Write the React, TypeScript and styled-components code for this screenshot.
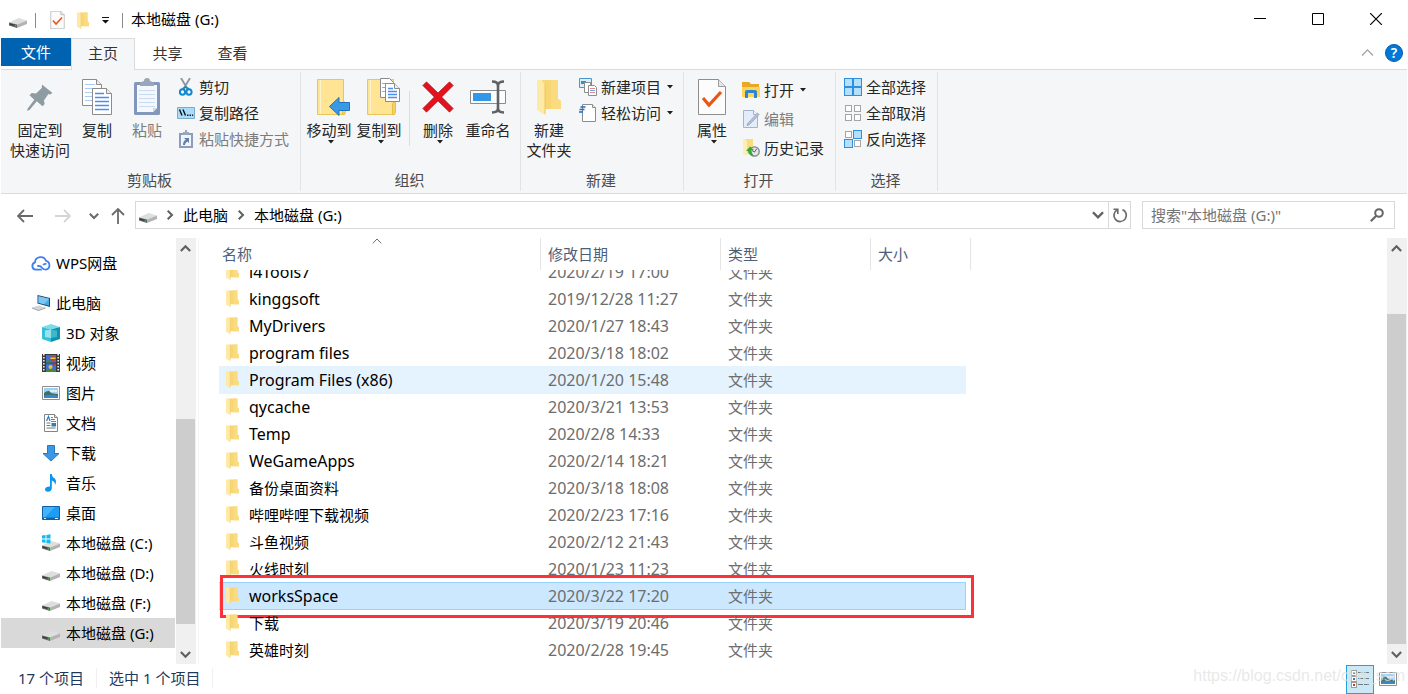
import React, { useLayoutEffect, useRef } from "react";
import styled, { createGlobalStyle, css } from "styled-components";

const GlobalStyle = createGlobalStyle`
  *, *::before, *::after { box-sizing: border-box; }
  body {
    margin: 0;
    background: #fff;
    color: #000;
    font: 15px/20px "Noto Sans", "Noto Sans CJK SC", sans-serif;
  }
  button, input {
    font: inherit;
    color: inherit;
    border: 0;
    padding: 0;
    margin: 0;
    background: none;
  }
  svg { display: block; flex: none; }
`;

const Window = styled.div`
  position: relative;
  display: flex;
  flex-direction: column;
  height: 100vh;
  min-height: 480px;
  padding: 0 1px;
  overflow: hidden;
`;

/* ---------- title bar ---------- */

const TitleBar = styled.header`
  display: flex;
  align-items: center;
  flex: none;
  height: 38px;
  padding: 0 2px 0 8px;
`;

const QuickAccess = styled.div`
  display: flex;
  align-items: center;
  height: 100%;
  padding-top: 2px;
`;

const QuickButton = styled.button<{ $w: number }>`
  display: flex;
  align-items: center;
  justify-content: center;
  width: ${(p) => p.$w}px;
  height: 24px;
`;

const Divider = styled.span<{ $gap?: number }>`
  width: 1px;
  height: 15px;
  margin: 0 ${(p) => p.$gap ?? 8}px;
  background: #8a8a8a;
`;

const Title = styled.h1`
  margin: 0;
  font-size: 15px;
  font-weight: inherit;
  line-height: 20px;
`;

const WindowControls = styled.div`
  display: flex;
  margin-left: auto;
`;

const ControlButton = styled.button`
  display: flex;
  align-items: center;
  justify-content: center;
  width: 58px;
  height: 38px;
`;

/* ---------- ribbon ---------- */

const TabBar = styled.div`
  display: flex;
  flex: none;
  height: 32px;
  border-bottom: 1px solid #dadbdc;
`;

const Tab = styled.button<{ $kind?: "file" | "active" }>`
  width: 65px;
  height: 31px;
  padding-bottom: 2px;
  color: #333;
  ${(p) =>
    p.$kind === "file" &&
    css`
      width: 70px;
      height: 28px;
      padding-bottom: 0;
      background: #0063b1;
      color: #fff;
    `}
  ${(p) =>
    p.$kind === "active" &&
    css`
      width: 64px;
      height: 32px;
      padding-bottom: 3px;
      border: 1px solid #dadbdc;
      border-bottom: 0;
      background: #f5f6f7;
    `}
`;

const TabTools = styled.div`
  display: flex;
  align-items: center;
  gap: 11px;
  margin-left: auto;
  padding: 0 4px 2px 0;
`;

const HelpButton = styled.button`
  width: 18px;
  height: 18px;
  border: 1px solid #0a5ca8;
  border-radius: 9px;
  background: #0078d7;
  color: #fff;
  font-size: 14px;
  font-weight: 600;
  line-height: 16px;
`;

const Ribbon = styled.div`
  display: flex;
  flex: none;
  height: 124px;
  padding: 2px 0;
  border-bottom: 1px solid #dadbdc;
  background: #f5f6f7;
  color: #262626;
`;

const Group = styled.section<{ $w: number }>`
  display: flex;
  flex-direction: column;
  width: ${(p) => p.$w}px;
  padding: 0 5px 0 3px;
  border-right: 1px solid #e2e3e4;
`;

const GroupBody = styled.div<{ $pad?: number }>`
  display: flex;
  flex: 1;
  padding-left: ${(p) => p.$pad ?? 0}px;
`;

const GroupLabel = styled.h2`
  margin: 0;
  padding-bottom: 2px;
  color: #4c4c4c;
  font-size: 15px;
  font-weight: inherit;
  line-height: 18px;
  text-align: center;
`;

const BigButton = styled.button<{ $w?: number }>`
  display: flex;
  flex-direction: column;
  align-items: center;
  flex: none;
  width: ${(p) => p.$w ?? 50}px;
  height: 92px;
  padding-top: 6px;
  line-height: 20px;
  white-space: nowrap;

  &:disabled { color: #7c7c7c; }
  > svg { margin-left: 3px; }
`;

const BigArt = styled.span`
  display: flex;
  align-items: center;
  justify-content: center;
  width: 44px;
  height: 38px;
  margin-bottom: 4px;
`;

const GroupRule = styled.span`
  width: 1px;
  height: 55px;
  margin: 19px 3px 0 5px;
  background: #dcddde;
`;

const SmallColumn = styled.div<{ $gap?: number; $top?: number }>`
  display: flex;
  flex-direction: column;
  align-items: flex-start;
  gap: ${(p) => p.$gap ?? 6}px;
  padding: ${(p) => p.$top ?? 5}px 0 0 5px;
`;

const SmallButton = styled.button`
  display: flex;
  align-items: center;
  gap: 4px;
  height: 20px;
  white-space: nowrap;

  &:disabled { color: #7c7c7c; }
  > svg:nth-of-type(2) { margin-left: 2px; }
`;

/* ---------- address bar ---------- */

const AddressRow = styled.nav`
  display: flex;
  align-items: center;
  flex: none;
  height: 44px;
  padding: 0 12px 2px 0;
`;

const NavButtons = styled.div`
  display: flex;
  align-items: center;
  padding: 2px 0 0 10px;
`;

const NavButton = styled.button<{ $w: number }>`
  display: flex;
  align-items: center;
  justify-content: center;
  width: ${(p) => p.$w}px;
  height: 24px;
`;

const AddressBox = styled.div`
  display: flex;
  align-items: center;
  flex: 1;
  height: 28px;
  padding-left: 3px;
  border: 1px solid #d9d9d9;
`;

const Crumb = styled.a`
  padding-bottom: 1px;
  color: #000;
  text-decoration: none;
`;

const CrumbArrow = styled.span`
  display: flex;
  justify-content: center;
  width: 26px;
`;

const AddressTools = styled.div`
  display: flex;
  height: 100%;
  margin-left: auto;
`;

const RefreshButton = styled(NavButton)`
  height: 100%;
  border-left: 1px solid #d9d9d9;
`;

const DropButton = styled(NavButton)`
  height: 100%;
`;

const SearchBox = styled.label`
  display: flex;
  align-items: center;
  width: 253px;
  height: 28px;
  margin-left: 11px;
  padding: 0 10px 0 8px;
  border: 1px solid #d9d9d9;
`;

const SearchInput = styled.input`
  flex: 1;
  min-width: 0;
  height: 24px;
  outline: 0;

  &::placeholder { color: #757575; opacity: 1; }
`;

/* ---------- body ---------- */

const Body = styled.div`
  display: flex;
  flex: 1;
  min-height: 0;
`;

const Sidebar = styled.aside`
  width: 174px;
  padding-top: 10px;
  overflow: hidden;
`;

const TreeItem = styled.a<{ $level: 0 | 1; $selected?: boolean; $spaced?: boolean }>`
  display: flex;
  align-items: center;
  gap: ${(p) => (p.$level ? 6 : 5)}px;
  height: 30px;
  margin-bottom: ${(p) => (p.$spaced ? 10 : 0)}px;
  padding-left: ${(p) => (p.$level ? 41 : 30)}px;
  background: ${(p) => (p.$selected ? "#d9d9d9" : "transparent")};
  color: #000;
  text-decoration: none;
  white-space: nowrap;
`;

const ScrollTrack = styled.div`
  display: flex;
  flex-direction: column;
  flex: none;
  width: 20px;
  background: #f0f0f0;
`;

const ScrollButton = styled.button`
  display: flex;
  align-items: center;
  justify-content: center;
  flex: none;
  width: 19px;
  height: 20px;
`;

const ScrollSpace = styled.div<{ $share: number }>`
  flex: ${(p) => p.$share} 0 0;
`;

const ScrollThumb = styled(ScrollSpace)`
  width: 19px;
  background: #cdcdcd;
`;

const SidebarScroll = styled(ScrollTrack)`
  margin-left: 1px;
`;

const Content = styled.main`
  flex: 1;
  min-width: 0;
  margin-left: 2px;
  padding-left: 20px;
  border-left: 1px solid #f5f5f5;
  overflow: auto;
  scrollbar-width: none;
`;

const FileTable = styled.table`
  width: 752px;
  border-spacing: 0;
  table-layout: fixed;
`;

const HeadCell = styled.th`
  position: sticky;
  top: 0;
  z-index: 1;
  height: 32px;
  padding: 0 0 0 7px;
  border-right: 1px solid #e5e5e5;
  background: #fff;
  color: #4c607a;
  font-weight: inherit;
  text-align: left;

  &:first-child { padding-left: 3px; }
`;

const SortMark = styled.span`
  position: absolute;
  top: -2px;
  left: 50%;
  margin-left: -8px;
`;

const Cell = styled.td`
  height: 27px;
  padding: 0 0 2px 7px;
  color: #6d6d6d;
  white-space: nowrap;
`;

const FileRow = styled.tr<{ $state?: "hover" | "selected" }>`
  position: relative;
  ${(p) =>
    p.$state === "hover" &&
    css`
      ${Cell} {
        background: #e5f3ff;
        box-shadow: 0 -1px 0 #e5f3ff;
      }
    `}
  ${(p) =>
    p.$state === "selected" &&
    css`
      ${Cell} {
        background: #cce8ff;
        box-shadow: 0 -1px 0 #99d1ff, inset 0 -1px 0 #99d1ff;
      }
      ${Cell}:last-child { border-right: 1px solid #99d1ff; }
    `}
`;

const FileName = styled.div<{ $latin: boolean }>`
  display: flex;
  align-items: center;
  gap: 10px;
  color: #000;
  font-size: ${(p) => (p.$latin ? 16 : 15)}px;
`;

const Stamp = styled.time`
  font-size: 16px;
`;

const Highlight = styled.span`
  position: absolute;
  inset: -8px -3px -8px 1px;
  border: 3px solid #fb3339;
  pointer-events: none;
`;

/* ---------- status bar ---------- */

const StatusBar = styled.footer`
  display: flex;
  align-items: center;
  flex: none;
  height: 30px;
  padding: 0 5px 0 17px;
  color: #1e395b;
`;

const StatusText = styled.span`
  padding-right: 12px;
  margin: 0 12px 2px 0;
  border-right: 1px solid #f0f0f0;
`;

const ViewButtons = styled.div`
  display: flex;
  margin-left: auto;
`;

const ViewButton = styled.button<{ $on?: boolean }>`
  display: flex;
  align-items: center;
  justify-content: center;
  width: 28px;
  height: 29px;
  border: 1px solid ${(p) => (p.$on ? "#26a0da" : "transparent")};
  background: ${(p) => (p.$on ? "#cbe8f6" : "transparent")};
`;

const Watermark = styled.span`
  position: absolute;
  right: 3px;
  bottom: 8px;
  color: rgba(225, 225, 225, 0.75);
  font: 16px/20px "Liberation Sans", sans-serif;
  pointer-events: none;
`;

/* ---------- icons ---------- */

const DriveIcon = ({ system }: { system?: boolean }) => (
  <svg width="18" height="18" viewBox="0 0 18 18">
    <path d="M0 11.500 9.500 7 18 9.500 8 13.500z" fill="#dedede" />
    <path d="M0 11.500 8 13.500v3.500L0 14.500z" fill="#606060" />
    <path d="M8 13.500 18 9.500v3.500L8 17z" fill="#b3b3b3" />
    <path d="M1 13 7 14.800" stroke="#333" />
    <path d="M5.500 14.200h1.500v1.300H5.500z" fill="#35d24a" />
    {system && (
      <path d="M0 1.600 3.500 1v3.500H0zM4.400.9 8.500.2v4.300H4.400zM0 5.400h3.500v3.500L0 8.300zM4.400 5.400h4.100v4.200l-4.100-.7z" fill="#16b9f2" />
    )}
  </svg>
);

const CheckPage = ({ w, h }: { w: number; h: number }) => (
  <svg width={w} height={h} viewBox="0 0 28 36">
    <path d="M.5.5h20l7 7v28H.5z" fill="#fcfcfc" stroke="#8e8e8e" />
    <path d="M20.5.5v7h7" fill="#e6e6e6" stroke="#9a9a9a" />
    <path d="m5 19 6 7L23 13" fill="none" stroke="#ea5514" strokeWidth="3.2" />
  </svg>
);

const FolderIcon = ({ w, h }: { w: number; h: number }) => (
  <svg width={w} height={h} viewBox="0 0 24 36" preserveAspectRatio="none">
    <path d="M5 1h16v19l3 2v8H5z" fill="#f7d674" />
    <path d="M14 1h7v19l3 2v8H14z" fill="#fadb80" />
    <path d="M0 1h4l4 4v31l-8-5z" fill="#ffe9a6" />
    <path d="M8 5v30" stroke="#efc65c" />
  </svg>
);

const Caret = () => (
  <svg width="6" height="4" viewBox="0 0 6 4">
    <path d="M0 0h6L3 3.500z" fill="#1e1e1e" />
  </svg>
);

const Chevron = ({ dir, size = 10, color = "#606060", width = 2 }: { dir: "up" | "down" | "right"; size?: number; color?: string; width?: number }) => (
  <svg width={size} height={size} viewBox="0 0 10 10">
    <path
      d={dir === "up" ? "M.8 7.3 5 3l4.200 4.300" : dir === "down" ? "M.8 2.700 5 7l4.200-4.300" : "M2.700.8 7 5 2.700 9.200"}
      fill="none"
      stroke={color}
      strokeWidth={width}
    />
  </svg>
);

const PinIcon = () => (
  <svg width="28" height="36" viewBox="0 0 28 36">
    <path d="M16 5.500 26.500 14l-2.300 1.500-1.800-.5-4.500 6.500.8 3.500-2.200 2.200-5.700-5L3.500 31l-2.500.8.7-2.300 6.600-8.800-4.800-4.500 2.200-2.300 4.300.6 5.800-5.500z" fill="#8f9ba3" />
  </svg>
);

const CopyIcon = () => (
  <svg width="30" height="36" viewBox="0 0 30 36">
    <path d="M.5.500h14l5 5v21H.5z" fill="#fff" stroke="#8b8b8b" />
    <path d="M14.500.500v5h5" fill="#eee" stroke="#8b8b8b" />
    <path d="M3 5.500h10M3 9.500h14M3 13.500h14M3 17.500h8M3 21.500h8" stroke="#a9caf5" />
    <path d="M10.500 9.500h14l5 5v21h-19z" fill="#fff" stroke="#8b8b8b" />
    <path d="M24.500 9.500v5h5" fill="#eee" stroke="#8b8b8b" />
    <path d="M13 14.500h9M13 18.500h14M13 22.500h14M13 26.500h14M13 30.500h14" stroke="#4b8df0" strokeWidth="1.400" />
  </svg>
);

const PasteIcon = () => (
  <svg width="28" height="38" viewBox="0 0 28 38">
    <rect x="1" y="4" width="26" height="33" rx="1.500" fill="#8396bb" />
    <path d="M4 7h20v23l-4 4H4z" fill="#f4f8fd" />
    <path d="M6 12.500h16M6 16.500h16M6 20.500h16M6 24.500h16M6 28.500h16" stroke="#c9dbee" />
    <path d="m20 34 4-4h-4z" fill="#cfd9e8" />
    <path d="M7 8V4.500L11 3a3 3 0 0 1 6 0l4 1.500V8z" fill="#98a5bb" />
  </svg>
);

const ScissorsIcon = () => (
  <svg width="18" height="18" viewBox="0 0 18 18">
    <path d="m4 0 6.500 11M13 0 6.500 11" stroke="#8d9499" strokeWidth="1.800" />
    <ellipse cx="5.500" cy="14" rx="2.600" ry="2.800" fill="none" stroke="#1488cc" strokeWidth="2" />
    <ellipse cx="12" cy="14" rx="2.600" ry="2.800" fill="none" stroke="#1488cc" strokeWidth="2" />
    <path d="m5.500 11 3-2 3.500 2" fill="none" stroke="#1488cc" strokeWidth="1.800" />
  </svg>
);

const PathIcon = () => (
  <svg width="18" height="18" viewBox="0 0 18 18">
    <path d="M.5 3.500h17v11H.5z" fill="#a9dcfb" stroke="#7fa9c4" />
    <path d="m2.500 5.500 2.500 6M6 5.500l2.500 6" stroke="#111" strokeWidth="1.400" />
    <path d="M10 10.500h1.500v1.500H10zM12.500 10.500H14v1.500h-1.500zM15 10.500h1.200v1.500H15z" fill="#222" />
  </svg>
);

const PasteShortcutIcon = () => (
  <svg width="18" height="18" viewBox="0 0 18 18">
    <path d="M2 3h14v15H2z" fill="#8c9dbc" />
    <path d="M4 5h10v11H4z" fill="#f1f5fb" />
    <path d="M6 5V2h2V0h2v2h2v3z" fill="#9aa8be" />
    <path d="M7 8h5v5l-1.600-1.600Q8 12.500 8 15H6q0-4 2.800-5.200z" fill="#5e7fae" />
  </svg>
);

const BigFolder = () => (
  <>
    <path d="M1.500 1.500h26v35h-26z" fill="#ffe494" stroke="#e8c65a" />
    <path d="M4.500 2v34" stroke="#fff3c9" />
    <path d="M26.500 36.500v-11q1.500-3 3-1v9l-1 3z" fill="#f8d260" stroke="#e5bd4a" />
  </>
);

const MoveToIcon = () => (
  <svg width="42" height="38" viewBox="-8 0 42 38">
    <BigFolder />
    <path d="M13.500 28.500 23 19.500v5h10.500v8H23v5z" fill="#3a99e6" stroke="#1f74bb" />
  </svg>
);

const CopyToIcon = () => (
  <svg width="42" height="38" viewBox="-8 0 42 38">
    <BigFolder />
    <path d="M14.500.500h9l4 4v15h-13z" fill="#fff" stroke="#8b8b8b" />
    <path d="M16 5.500h5M16 9.500h4M16 13.500h4" stroke="#7eb0f0" />
    <path d="M19.500 5.500h9l5 5v13h-14z" fill="#fff" stroke="#8b8b8b" />
    <path d="M28.500 5.500v5h5" fill="#eee" stroke="#8b8b8b" />
    <path d="M22 10.500h5M22 13.500h9M22 16.500h9M22 19.500h9" stroke="#4b8df0" strokeWidth="1.400" />
  </svg>
);

const DeleteIcon = () => (
  <svg width="32" height="36" viewBox="0 0 32 36">
    <path d="m1 6.500 3.500-3.500L16 14.200 27.500 3 31 6.500 19.500 18 31 29.500 27.500 33 16 21.700 4.500 33 1 29.500 12.500 18z" fill="#e8101b" stroke="#a3141b" />
  </svg>
);

const RenameIcon = () => (
  <svg width="36" height="36" viewBox="0 0 36 36">
    <path d="M.5 11.500h35v13H.5z" fill="#fdfdfd" stroke="#8c8c8c" />
    <path d="M3 14h18v8H3z" fill="#3297e6" />
    <path d="M28 4v28" stroke="#5f6163" strokeWidth="2.600" />
    <path d="M22 2.500q6 0 6 4 0-4 6-4M22 33.500q6 0 6-4 0 4 6 4" fill="none" stroke="#5f6163" strokeWidth="2.400" />
  </svg>
);

const NewItemIcon = () => (
  <svg width="18" height="18" viewBox="0 0 18 18">
    <path d="M.5.500h12v9H.5z" fill="#d6effc" stroke="#4b98c8" />
    <path d="M2 3h5v3H2z" fill="#3b8fb4" />
    <path d="M5.500 4.500h6v10h-6z" fill="#fff" stroke="#8d8d8d" />
    <path d="M9.500 7.500h6l2 2v8h-8z" fill="#fff" stroke="#8d8d8d" />
    <path d="M11 10.500h5M11 14.500h5" stroke="#e08a8a" />
    <path d="M11 12.500h5" stroke="#6ea6e8" />
  </svg>
);

const EasyAccessIcon = () => (
  <svg width="18" height="18" viewBox="0 0 18 18">
    <path d="M3.500.500h10l3 3v14h-13z" fill="#fff" stroke="#8d8d8d" />
    <path d="M13.500.500v3h3" fill="#eee" stroke="#8d8d8d" />
    <path d="M1.500 3h5M.5 5.500h5M0 8h4" stroke="#1f6fc2" strokeWidth="1.300" />
  </svg>
);

const OpenIcon = () => (
  <svg width="18" height="18" viewBox="0 0 18 18">
    <path d="M0 1h7l2 2h8v4H0z" fill="#e8a825" />
    <path d="M0 6h18v10H0z" fill="#ffd45c" />
    <path d="M3 17v-6q0-2 2-2h8q2 0 2 2v6h-3v-5H6v5z" fill="#2d86cf" />
  </svg>
);

const EditIcon = () => (
  <svg width="18" height="18" viewBox="0 0 18 18">
    <path d="M1.500.500h10l4 4v13h-14z" fill="#e3ecf9" stroke="#a5b4cb" />
    <path d="M11.500.500v4h4" fill="#f5f8fd" stroke="#a5b4cb" />
    <path d="m5 15.500.8-2.300L15.500 3l1.700 1.500L7.300 14.700z" fill="#b4c2d8" stroke="#8796b0" strokeWidth=".6" />
  </svg>
);

const HistoryIcon = () => (
  <svg width="18" height="18" viewBox="0 0 18 18">
    <path d="M1 0h10v15H1z" fill="#fbdc7c" />
    <path d="M1 0h2l2 2v15l-4-2z" fill="#ffedb3" />
    <circle cx="12.500" cy="12.500" r="4.700" fill="#e3e5e6" stroke="#7c8285" strokeWidth="1.300" />
    <path d="M15 9.500 12.500 13 10 11.500" fill="none" stroke="#5b6164" />
    <path d="M4 12 8 7.500 12 11H9.500q0 4 3 6Q6.500 17 6 12z" fill="#35a83a" />
  </svg>
);

const squares: [number, number][] = [[1, 1], [10, 1], [1, 10], [10, 10]];

const SelectIcon = ({ on }: { on: boolean[] }) => (
  <svg width="18" height="18" viewBox="0 0 18 18">
    {squares.map(([x, y], i) =>
      on[i] ? (
        <rect key={i} x={x - 0.5} y={y - 0.5} width="8" height="8" fill="#b5e0fc" stroke="#2d8fdd" />
      ) : (
        <rect key={i} x={x + 0.5} y={y + 0.5} width="6" height="6" fill="#fdfdfd" stroke="#a5a5a5" />
      ),
    )}
  </svg>
);

const Arrow = ({ d, color }: { d: string; color: string }) => (
  <svg width="16" height="16" viewBox="0 0 16 16">
    <path d={d} fill="none" stroke={color} strokeWidth="1.800" />
  </svg>
);

const RefreshIcon = () => (
  <svg width="16" height="16" viewBox="0 0 16 16">
    <path d="M5 3A6.200 6.200 0 1 0 10.500 2.600" fill="none" stroke="#6a6a6a" strokeWidth="1.700" />
    <path d="M5.800 7V2.300H1.500" fill="none" stroke="#6a6a6a" strokeWidth="1.600" />
  </svg>
);

const SearchIcon = () => (
  <svg width="14" height="14" viewBox="0 0 14 14">
    <circle cx="9" cy="5" r="3.800" fill="none" stroke="#666" strokeWidth="2" />
    <path d="M6 8 .8 13.200" stroke="#666" strokeWidth="2.200" />
  </svg>
);

const CloudIcon = () => (
  <svg width="20" height="18" viewBox="0 0 20 18">
    <path d="M10 15.700H4.800A3.800 3.800 0 0 1 4 8.300 5.700 5.700 0 0 1 15 6.800 4.600 4.600 0 0 1 15 15.700q-2.500 0-3.800-1.700Q9.500 11.500 7 12" fill="none" stroke="#3f7ff0" strokeWidth="1.800" strokeLinecap="round" />
    <path d="M12 11q1.500-1.500 3.500-1" fill="none" stroke="#3f7ff0" strokeWidth="1.500" />
  </svg>
);

const ComputerIcon = () => (
  <svg width="20" height="18" viewBox="0 0 20 18">
    <path d="m6.500 1 12.500 3v9L6.500 9.500z" fill="#2c4257" />
    <path d="m7.500 2.300 10.500 2.500v7L7.500 8.800z" fill="#46a9e8" />
    <path d="m7.500 2.300 10.500 2.500-5 5.400-5.500-1.400z" fill="#7cc8f5" />
    <path d="m1 13.500 7-2 6.500 2-7 2.500z" fill="#cfd4d8" />
    <path d="m1 13.500 6.500 2.500v1L1 14.500zM14.500 13.500 7.500 16v1l7-2.500z" fill="#9ba1a6" />
  </svg>
);

const CubeIcon = () => (
  <svg width="18" height="18" viewBox="0 0 18 18">
    <path d="M0 3 9 0l9 3-9 2.500z" fill="#7bdcea" />
    <path d="M0 3 9 5.500V18l-9-3z" fill="#35c0d8" />
    <path d="M18 3 9 5.500V18l9-3z" fill="#0c93b0" />
    <path d="M3 6.500 9 5.500v8.500L3 13z" fill="#c4f2f8" opacity=".7" />
    <path d="M9 5.500l6 1V13l-6 1z" fill="#3eb6cc" />
  </svg>
);

const VideoIcon = () => (
  <svg width="18" height="18" viewBox="0 0 18 18">
    <path d="M0 0h18v18H0z" fill="#3a3a3a" />
    <path d="M4 1h10v7.500H4zM4 9.500h10V18H4z" fill="#3f6fd2" />
    <path d="M1.800 0v18M16.200 0v18" stroke="#ececec" strokeWidth="1.600" strokeDasharray="1.600 1.400" />
    <circle cx="11" cy="4.500" r="2.500" fill="#d9352b" />
    <path d="M8.500 3.500h5v1.500h-5z" fill="#e9d02f" />
    <path d="M4 7q3-2 6 1.500H4zM4 16q5-2 10 0v2H4z" fill="#3e8b3a" />
    <circle cx="8.500" cy="13" r="2" fill="#edc12c" />
    <path d="m10 9.500 2 2.500 1.500-2.500z" fill="#c92c20" />
  </svg>
);

const PictureIcon = () => (
  <svg width="18" height="18" viewBox="0 0 18 18">
    <path d="M.5 2.500h17v13H.5z" fill="#fff" stroke="#8f8f8f" />
    <path d="M2 4h14v10H2z" fill="#9fd0f3" />
    <path d="M2 9q5-4 7 0 3 1 7 1v2H2z" fill="#3f6f62" />
    <path d="M2 11.500q7-1.500 14 0V14H2z" fill="#3d86c4" />
    <path d="M8 6h7v2H8z" fill="#d9eefb" />
  </svg>
);

const DocumentIcon = () => (
  <svg width="18" height="18" viewBox="0 0 18 18">
    <path d="M2.500.500h10l3 3v14h-13z" fill="#fff" stroke="#858585" />
    <path d="M12.500.500v3h3" fill="#ddd" stroke="#858585" />
    <path d="m4.500 7 2-4.500L8 7" fill="none" stroke="#2a80c4" strokeWidth="1.200" />
    <path d="M9 5.500h4M4.500 9h4M4.500 11.500h4M4.500 14h9" stroke="#777" />
    <path d="M9 3.500h2M9 7.500h5" stroke="#2a9ad4" />
    <path d="M9.500 9H14v3.500H9.500z" fill="#2c7fae" />
  </svg>
);

const DownloadIcon = () => (
  <svg width="18" height="18" viewBox="0 0 18 18">
    <path d="M5.500 1.500h7v8h4.500l-8 7.500L1 9.500h4.500z" fill="#3c97e4" stroke="#2878bd" />
  </svg>
);

const MusicIcon = () => (
  <svg width="18" height="18" viewBox="0 0 18 18">
    <path d="M8 0h1.700q.3 3 3 4.500 2.500 2 .3 6.500.2-3.500-3.200-4.500v7.700Q9.500 17.500 6 17.800 3 17.800 3 15.300 3.500 12.300 8 12.500z" fill="#0a96f0" />
  </svg>
);

const DesktopIcon = () => (
  <svg width="18" height="18" viewBox="0 0 18 18">
    <path d="M.5 2.500h17v13H.5z" fill="#1e9cf5" stroke="#0b62a8" />
    <path d="M1 13.500h16V15H1z" fill="#0a66b0" />
    <path d="M2 14h2v1H2zM13 14h3v1h-3z" fill="#e8f4fd" />
    <path d="M1 3h12L3 13H1z" fill="#45b2fa" />
  </svg>
);

const DetailsIcon = () => (
  <svg width="20" height="18" viewBox="0 0 20 18">
    {[1, 7, 13].map((y, i) => (
      <g key={y}>
        <rect x="1.500" y={y - 0.5} width="5" height="5" fill="#fff" stroke="#9d9d9d" />
        <rect x="3" y={y + 1} width="2" height="2" fill={["#4d7a74", "#3c76b8", "#c93a2c"][i]} />
        <path d={`M8 ${y + 1.5}h5M14 ${y + 1.5}h5`} stroke="#6e7a80" />
      </g>
    ))}
  </svg>
);

/* ---------- data ---------- */

const places: { name: string; icon: React.ReactNode; level: 0 | 1; spaced?: boolean; selected?: boolean }[] = [
  { name: "WPS网盘", icon: <CloudIcon />, level: 0, spaced: true },
  { name: "此电脑", icon: <ComputerIcon />, level: 0 },
  { name: "3D 对象", icon: <CubeIcon />, level: 1 },
  { name: "视频", icon: <VideoIcon />, level: 1 },
  { name: "图片", icon: <PictureIcon />, level: 1 },
  { name: "文档", icon: <DocumentIcon />, level: 1 },
  { name: "下载", icon: <DownloadIcon />, level: 1 },
  { name: "音乐", icon: <MusicIcon />, level: 1 },
  { name: "桌面", icon: <DesktopIcon />, level: 1 },
  { name: "本地磁盘 (C:)", icon: <DriveIcon system />, level: 1 },
  { name: "本地磁盘 (D:)", icon: <DriveIcon />, level: 1 },
  { name: "本地磁盘 (F:)", icon: <DriveIcon />, level: 1 },
  { name: "本地磁盘 (G:)", icon: <DriveIcon />, level: 1, selected: true },
];

const files: { name: string; date: string; state?: "hover" | "selected" }[] = [
  { name: "i4Tools7", date: "2020/2/19 17:00" },
  { name: "kinggsoft", date: "2019/12/28 11:27" },
  { name: "MyDrivers", date: "2020/1/27 18:43" },
  { name: "program files", date: "2020/3/18 18:02" },
  { name: "Program Files (x86)", date: "2020/1/20 15:48", state: "hover" },
  { name: "qycache", date: "2020/3/21 13:53" },
  { name: "Temp", date: "2020/2/8 14:33" },
  { name: "WeGameApps", date: "2020/2/14 18:21" },
  { name: "备份桌面资料", date: "2020/3/18 18:08" },
  { name: "哔哩哔哩下载视频", date: "2020/2/23 17:16" },
  { name: "斗鱼视频", date: "2020/2/12 21:43" },
  { name: "火线时刻", date: "2020/1/23 11:23" },
  { name: "worksSpace", date: "2020/3/22 17:20", state: "selected" },
  { name: "下载", date: "2020/3/19 20:46" },
  { name: "英雄时刻", date: "2020/2/28 19:45" },
];

const isLatin = (text: string) => /^[\x20-\x7e]+$/.test(text);

/* ---------- sections ---------- */

const RibbonPanel = () => (
  <Ribbon>
    <Group $w={300}>
      <GroupBody $pad={4}>
        <BigButton $w={64}><BigArt><PinIcon /></BigArt>固定到<br />快速访问</BigButton>
        <BigButton><BigArt><CopyIcon /></BigArt>复制</BigButton>
        <BigButton disabled><BigArt><PasteIcon /></BigArt>粘贴</BigButton>
        <SmallColumn>
          <SmallButton><ScissorsIcon />剪切</SmallButton>
          <SmallButton><PathIcon />复制路径</SmallButton>
          <SmallButton disabled><PasteShortcutIcon />粘贴快捷方式</SmallButton>
        </SmallColumn>
      </GroupBody>
      <GroupLabel>剪贴板</GroupLabel>
    </Group>
    <Group $w={220}>
      <GroupBody>
        <BigButton><BigArt><MoveToIcon /></BigArt>移动到<Caret /></BigButton>
        <BigButton><BigArt><CopyToIcon /></BigArt>复制到<Caret /></BigButton>
        <GroupRule />
        <BigButton><BigArt><DeleteIcon /></BigArt>删除<Caret /></BigButton>
        <BigButton><BigArt><RenameIcon /></BigArt>重命名</BigButton>
      </GroupBody>
      <GroupLabel>组织</GroupLabel>
    </Group>
    <Group $w={163}>
      <GroupBody>
        <BigButton><BigArt><FolderIcon w={24} h={36} /></BigArt>新建<br />文件夹</BigButton>
        <SmallColumn>
          <SmallButton><NewItemIcon />新建项目<Caret /></SmallButton>
          <SmallButton><EasyAccessIcon />轻松访问<Caret /></SmallButton>
        </SmallColumn>
      </GroupBody>
      <GroupLabel>新建</GroupLabel>
    </Group>
    <Group $w={152}>
      <GroupBody>
        <BigButton><BigArt><CheckPage w={28} h={36} /></BigArt>属性<Caret /></BigButton>
        <SmallColumn $gap={9} $top={8}>
          <SmallButton><OpenIcon />打开<Caret /></SmallButton>
          <SmallButton disabled><EditIcon />编辑</SmallButton>
          <SmallButton><HistoryIcon />历史记录</SmallButton>
        </SmallColumn>
      </GroupBody>
      <GroupLabel>打开</GroupLabel>
    </Group>
    <Group $w={102}>
      <GroupBody>
        <SmallColumn>
          <SmallButton><SelectIcon on={[true, true, true, true]} />全部选择</SmallButton>
          <SmallButton><SelectIcon on={[false, false, false, false]} />全部取消</SmallButton>
          <SmallButton><SelectIcon on={[false, true, true, false]} />反向选择</SmallButton>
        </SmallColumn>
      </GroupBody>
      <GroupLabel>选择</GroupLabel>
    </Group>
  </Ribbon>
);

const FileList = () => {
  const viewport = useRef<HTMLElement>(null);

  useLayoutEffect(() => {
    const el = viewport.current;
    if (el) el.scrollTop = el.scrollHeight;
  }, []);

  return (
    <Content ref={viewport}>
      <FileTable>
        <colgroup>
          <col width="322" />
          <col width="180" />
          <col width="150" />
          <col width="95" />
          <col width="5" />
        </colgroup>
        <thead>
          <tr>
            <HeadCell>
              名称
              <SortMark><Chevron dir="up" color="#6d6d6d" width={1} /></SortMark>
            </HeadCell>
            <HeadCell>修改日期</HeadCell>
            <HeadCell>类型</HeadCell>
            <HeadCell colSpan={2}>大小</HeadCell>
          </tr>
        </thead>
        <tbody>
          {files.map((file) => (
            <FileRow key={file.name} $state={file.state}>
              <Cell>
                <FileName $latin={isLatin(file.name)}>
                  <FolderIcon w={13} h={17} />
                  {file.name}
                </FileName>
                {file.state === "selected" && <Highlight />}
              </Cell>
              <Cell><Stamp>{file.date}</Stamp></Cell>
              <Cell>文件夹</Cell>
              <Cell />
            </FileRow>
          ))}
        </tbody>
      </FileTable>
    </Content>
  );
};

export default function App() {
  return (
    <Window>
      <GlobalStyle />
      <TitleBar>
        <QuickAccess>
          <DriveIcon />
          <Divider />
          <QuickButton $w={26} aria-label="属性"><CheckPage w={15} h={18} /></QuickButton>
          <QuickButton $w={26} aria-label="新建文件夹"><FolderIcon w={12} h={17} /></QuickButton>
          <QuickButton $w={18} aria-label="自定义快速访问工具栏">
            <svg width="7" height="7" viewBox="0 0 7 7"><path d="M0 0h7v1H0zM0 3h7L3.500 6.500z" fill="#111" /></svg>
          </QuickButton>
          <Divider />
        </QuickAccess>
        <Title>本地磁盘 (G:)</Title>
        <WindowControls>
          <ControlButton aria-label="最小化">
            <svg width="12" height="12"><path d="M0 5.500h12" stroke="#000" /></svg>
          </ControlButton>
          <ControlButton aria-label="最大化">
            <svg width="12" height="12"><path d="M.5.500h11v11H.5z" fill="none" stroke="#000" /></svg>
          </ControlButton>
          <ControlButton aria-label="关闭">
            <svg width="12" height="12"><path d="m0 0 12 12M12 0 0 12" stroke="#000" strokeWidth="1.200" /></svg>
          </ControlButton>
        </WindowControls>
      </TitleBar>

      <TabBar>
        <Tab $kind="file">文件</Tab>
        <Tab $kind="active">主页</Tab>
        <Tab>共享</Tab>
        <Tab>查看</Tab>
        <TabTools>
          <Chevron dir="up" size={13} color="#a0a0a0" width={1} />
          <HelpButton aria-label="帮助">?</HelpButton>
        </TabTools>
      </TabBar>

      <RibbonPanel />

      <AddressRow>
        <NavButtons>
          <NavButton $w={28} aria-label="返回"><Arrow d="M16 8H1M7 2 1 8l6 6" color="#6a6a6a" /></NavButton>
          <NavButton $w={48} aria-label="前进"><Arrow d="M0 8h15M9 2l6 6-6 6" color="#d5d5d5" /></NavButton>
          <NavButton $w={14} aria-label="最近浏览的位置"><Chevron dir="down" size={10} color="#6a6a6a" /></NavButton>
          <NavButton $w={34} aria-label="向上"><Arrow d="M8 16V1M2 7l6-6 6 6" color="#6a6a6a" /></NavButton>
        </NavButtons>
        <AddressBox>
          <DriveIcon />
          <CrumbArrow><Chevron dir="right" size={10} /></CrumbArrow>
          <Crumb href="#pc">此电脑</Crumb>
          <CrumbArrow><Chevron dir="right" size={10} /></CrumbArrow>
          <Crumb href="#g">本地磁盘 (G:)</Crumb>
          <AddressTools>
            <DropButton $w={20} aria-label="以前的位置"><Chevron dir="down" size={12} /></DropButton>
            <RefreshButton $w={22} aria-label="刷新"><RefreshIcon /></RefreshButton>
          </AddressTools>
        </AddressBox>
        <SearchBox>
          <SearchInput type="text" aria-label="搜索" placeholder={'搜索"本地磁盘 (G:)"'} />
          <SearchIcon />
        </SearchBox>
      </AddressRow>

      <Body>
        <Sidebar>
          {places.map((place) => (
            <TreeItem key={place.name} href="#" $level={place.level} $spaced={place.spaced} $selected={place.selected}>
              {place.icon}
              {place.name}
            </TreeItem>
          ))}
        </Sidebar>
        <SidebarScroll>
          <ScrollButton aria-label="向上滚动"><Chevron dir="up" size={11} /></ScrollButton>
          <ScrollSpace $share={161} />
          <ScrollThumb $share={204} />
          <ScrollSpace $share={20} />
          <ScrollButton aria-label="向下滚动"><Chevron dir="down" size={11} /></ScrollButton>
        </SidebarScroll>
        <FileList />
        <ScrollTrack>
          <ScrollButton aria-label="向上滚动"><Chevron dir="up" size={11} /></ScrollButton>
          <ScrollSpace $share={56} />
          <ScrollThumb $share={329} />
          <ScrollButton aria-label="向下滚动"><Chevron dir="down" size={11} /></ScrollButton>
        </ScrollTrack>
      </Body>

      <StatusBar>
        <StatusText>17 个项目</StatusText>
        <StatusText>选中 1 个项目</StatusText>
        <ViewButtons>
          <ViewButton $on aria-label="详细信息"><DetailsIcon /></ViewButton>
          <ViewButton aria-label="大图标"><PictureIcon /></ViewButton>
        </ViewButtons>
      </StatusBar>
      <Watermark>https://blog.csdn.net/chd_ssm</Watermark>
    </Window>
  );
}
